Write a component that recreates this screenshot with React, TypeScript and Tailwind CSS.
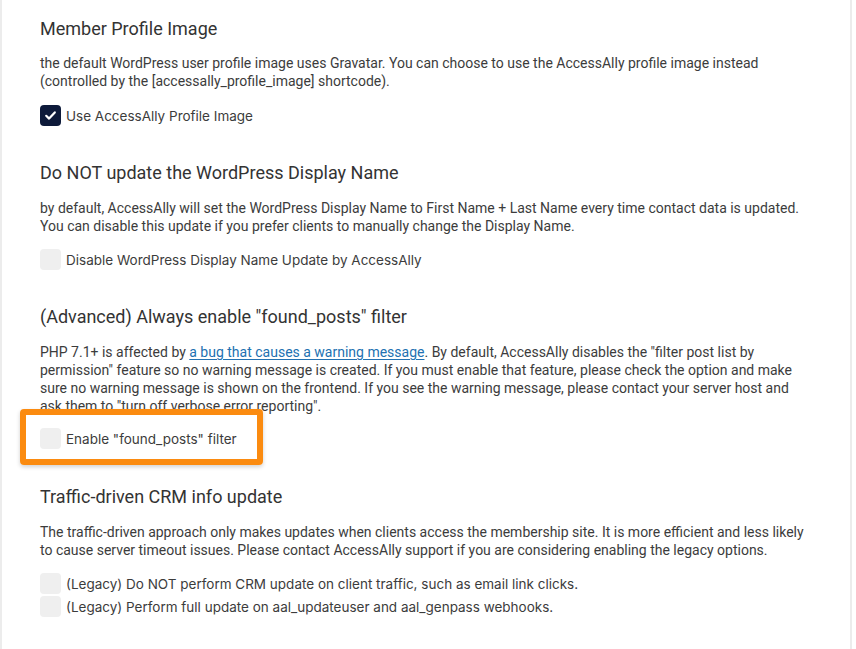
import React from "react";

function Box({ checked = false }: { checked?: boolean }) {
  if (checked) {
    return (
      <span className="flex h-[21px] w-[21px] shrink-0 items-center justify-center rounded-[4px] bg-[#0d1a3a]">
        <svg width="13" height="13" viewBox="0 0 13 13" fill="none">
          <path d="M2.2 6.8 L5.1 9.6 L10.8 3.4" stroke="#fff" strokeWidth="2.2" strokeLinecap="round" strokeLinejoin="round" />
        </svg>
      </span>
    );
  }
  return <span className="block h-[21px] w-[21px] shrink-0 rounded-[4px] bg-[#efefef]" />;
}

function Row({ checked, label }: { checked?: boolean; label: string }) {
  return (
    <div className="flex items-center gap-[5px] h-[21px]">
      <Box checked={checked} />
      <span className="font-['Inter',sans-serif] text-[13.5px] leading-[18px] text-[#3c3c3c]">{label}</span>
    </div>
  );
}

export default function App() {
  return (
    <div
      className="w-[856px] h-[649px] bg-white overflow-hidden"
      style={{ fontFamily: "Roboto, 'Liberation Sans', sans-serif" }}
    >
      <div className="w-[852px] h-full border-l-2 border-r-2 border-[#ececec] pl-[38px] pr-[20px] pt-[17px]">
        {/* Section 1 */}
        <h2 className="text-[18px] leading-[24px] text-[#333] mb-[13px]">Member Profile Image</h2>
        <p className="text-[14px] leading-[18px] text-[#3c3c3c] mb-[15px]">
          the default WordPress user profile image uses Gravatar. You can choose to use the AccessAlly profile image instead
          <br />
          (controlled by the [accessally_profile_image] shortcode).
        </p>
        <Row checked label="Use AccessAlly Profile Image" />

        {/* Section 2 */}
        <h2 className="mt-[35px] text-[18px] leading-[24px] text-[#333] mb-[14px]">Do NOT update the WordPress Display Name</h2>
        <p className="text-[14px] leading-[18px] text-[#3c3c3c] mb-[14px]">
          by default, AccessAlly will set the WordPress Display Name to First Name + Last Name every time contact data is updated.
          <br />
          You can disable this update if you prefer clients to manually change the Display Name.
        </p>
        <Row label="Disable WordPress Display Name Update by AccessAlly" />

        {/* Section 3 */}
        <h2 className="mt-[35px] text-[18px] leading-[24px] text-[#333] mb-[14px]">(Advanced) Always enable "found_posts" filter</h2>
        <p className="text-[14px] leading-[18px] text-[#3c3c3c] mb-[13px]">
          PHP 7.1+ is affected by{" "}
          <a className="text-[#2271b1] underline underline-offset-2">a bug that causes a warning message</a>. By default, AccessAlly disables the "filter post list by
          <br />
          permission" feature so no warning message is created. If you must enable that feature, please check the option and make
          <br />
          sure no warning message is shown on the frontend. If you see the warning message, please contact your server host and
          <br />
          ask them to "turn off verbose error reporting".
        </p>
        <div className="relative">
          <Row label={'Enable "found_posts" filter'} />
          <div className="pointer-events-none absolute left-[-20px] top-[-19px] h-[56px] w-[243px] rounded-[4px] border-[6px] border-[#fb8b10] shadow-[0_2px_4px_rgba(0,0,0,0.18)]" />
        </div>

        {/* Section 4 */}
        <h2 className="mt-[36px] text-[18px] leading-[24px] text-[#333] mb-[14px]">Traffic-driven CRM info update</h2>
        <p className="text-[14px] leading-[18px] text-[#3c3c3c] mb-[14px]">
          The traffic-driven approach only makes updates when clients access the membership site. It is more efficient and less likely
          <br />
          to cause server timeout issues. Please contact AccessAlly support if you are considering enabling the legacy options.
        </p>
        <div className="flex flex-col gap-[2px]">
          <Row label="(Legacy) Do NOT perform CRM update on client traffic, such as email link clicks." />
          <Row label="(Legacy) Perform full update on aal_updateuser and aal_genpass webhooks." />
        </div>
      </div>
    </div>
  );
}
